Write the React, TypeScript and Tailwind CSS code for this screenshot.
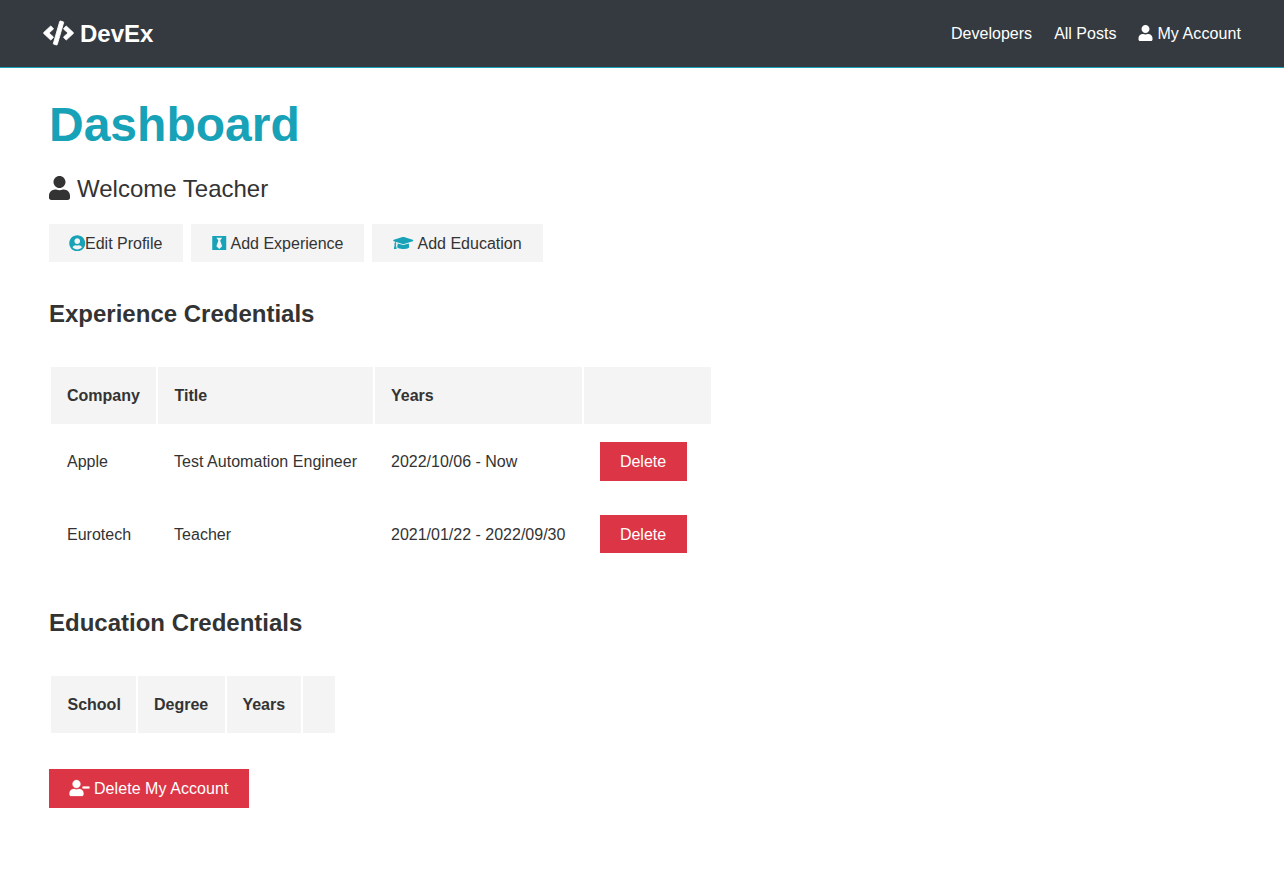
import React from 'react';
import { FaCode, FaUser, FaUserCircle, FaBlackTie, FaGraduationCap, FaUserMinus } from 'react-icons/fa';

const th = 'h-[57px] bg-[#f4f4f4] px-4 text-left font-bold';
const td = 'h-[71px] whitespace-nowrap px-4 py-0';
const light = 'flex h-[38px] items-center whitespace-nowrap bg-[#f4f4f4] pt-px';

const experience = [
  { company: 'Apple', title: 'Test Automation Engineer', years: '2022/10/06 - Now', button: 'h-[39px]' },
  { company: 'Eurotech', title: 'Teacher', years: '2021/01/22 - 2022/09/30', button: 'mb-px h-[38px] pt-px' },
];

export default function App() {
  return (
    <div className="min-h-[876px] bg-white font-['Liberation_Sans',Arial,sans-serif] text-base leading-[25.6px] text-[#333]">
      <nav className="flex h-[68px] items-center justify-between border-b border-[#17a2b8] bg-[#343a40] pr-[43px] pl-[43px] text-white">
        <h1 className="flex items-center gap-[6px] text-2xl font-bold">
          <FaCode className="mb-[2px] h-6 w-[31px] overflow-visible" strokeWidth="18" />
          DevEx
        </h1>
        <ul className="flex gap-[22px]">
          <li className="tracking-[0.02px]">Developers</li>
          <li>All Posts</li>
          <li className="flex items-center gap-1 tracking-[0.09px]">
            <FaUser className="mb-[2px] h-4 w-[15px]" />
            My Account
          </li>
        </ul>
      </nav>
      <main className="px-[49px] pt-[28px]">
        <h1 className="text-5xl leading-[58px] font-bold text-[#17a2b8]">Dashboard</h1>
        <p className="mt-4 flex h-[38px] items-center gap-[7px] text-2xl">
          <FaUser className="mb-[2px] h-6 w-[21px]" />
          Welcome Teacher
        </p>
        <div className="mt-4 flex gap-2">
          <a className={`${light} w-[134px] pl-5`}>
            <FaUserCircle className="mb-px h-[16.5px] w-[16.5px] shrink-0 text-[#17a2b8]" />
            <span className="-ml-[0.5px]">Edit Profile</span>
          </a>
          <a className={`${light} w-[173px] pl-[21px]`}>
            <FaBlackTie className="mr-1 mb-px h-4 w-[14.5px] shrink-0 text-[#17a2b8]" />
            Add Experience
          </a>
          <a className={`${light} w-[171px] pl-[21px]`}>
            <FaGraduationCap className="mr-1 mb-px h-4 w-[20.5px] shrink-0 text-[#17a2b8]" />
            Add Education
          </a>
        </div>
        <h2 className="mt-[32px] text-2xl leading-[39px] font-bold">Experience Credentials</h2>
        <table className="mt-[32px] w-[664px] table-fixed border-separate border-spacing-[2px]">
          <colgroup>
            <col className="w-[105px]" />
            <col className="w-[215px]" />
            <col className="w-[207px]" />
            <col />
          </colgroup>
          <thead>
            <tr>
              <th className={th}>Company</th>
              <th className={th}><span className="pl-[0.5px]">Title</span></th>
              <th className={th}>Years</th>
              <th className={th}></th>
            </tr>
          </thead>
          <tbody>
            {experience.map((e) => (
              <tr key={e.company}>
                <td className={td}>{e.company}</td>
                <td className={`${td} tracking-[0.03px]`}>{e.title}</td>
                <td className={td}>{e.years}</td>
                <td className={td}>
                  <button className={`${e.button} block w-[87px] bg-[#dc3545] pr-px text-center text-white`}>Delete</button>
                </td>
              </tr>
            ))}
          </tbody>
        </table>
        <h2 className="mt-[31px] text-2xl leading-[39px] font-bold">Education Credentials</h2>
        <table className="mt-[32px] w-[288px] table-fixed border-separate border-spacing-[2px]">
          <colgroup>
            <col className="w-[85px]" />
            <col className="w-[87px]" />
            <col className="w-[74px]" />
            <col />
          </colgroup>
          <thead>
            <tr>
              <th className={th}><span className="pl-[0.5px]">School</span></th>
              <th className={th}>Degree</th>
              <th className={th}><span className="-ml-[0.6px]">Years</span></th>
              <th className={th}></th>
            </tr>
          </thead>
        </table>
        <button className="mt-[34px] flex h-[39px] w-[200px] items-center bg-[#dc3545] pl-5 tracking-[0.06px] whitespace-nowrap text-white">
          <FaUserMinus className="mr-1 mb-px h-4 w-[21px] shrink-0 overflow-visible" strokeWidth="8" />
          Delete My Account
        </button>
      </main>
    </div>
  );
}
